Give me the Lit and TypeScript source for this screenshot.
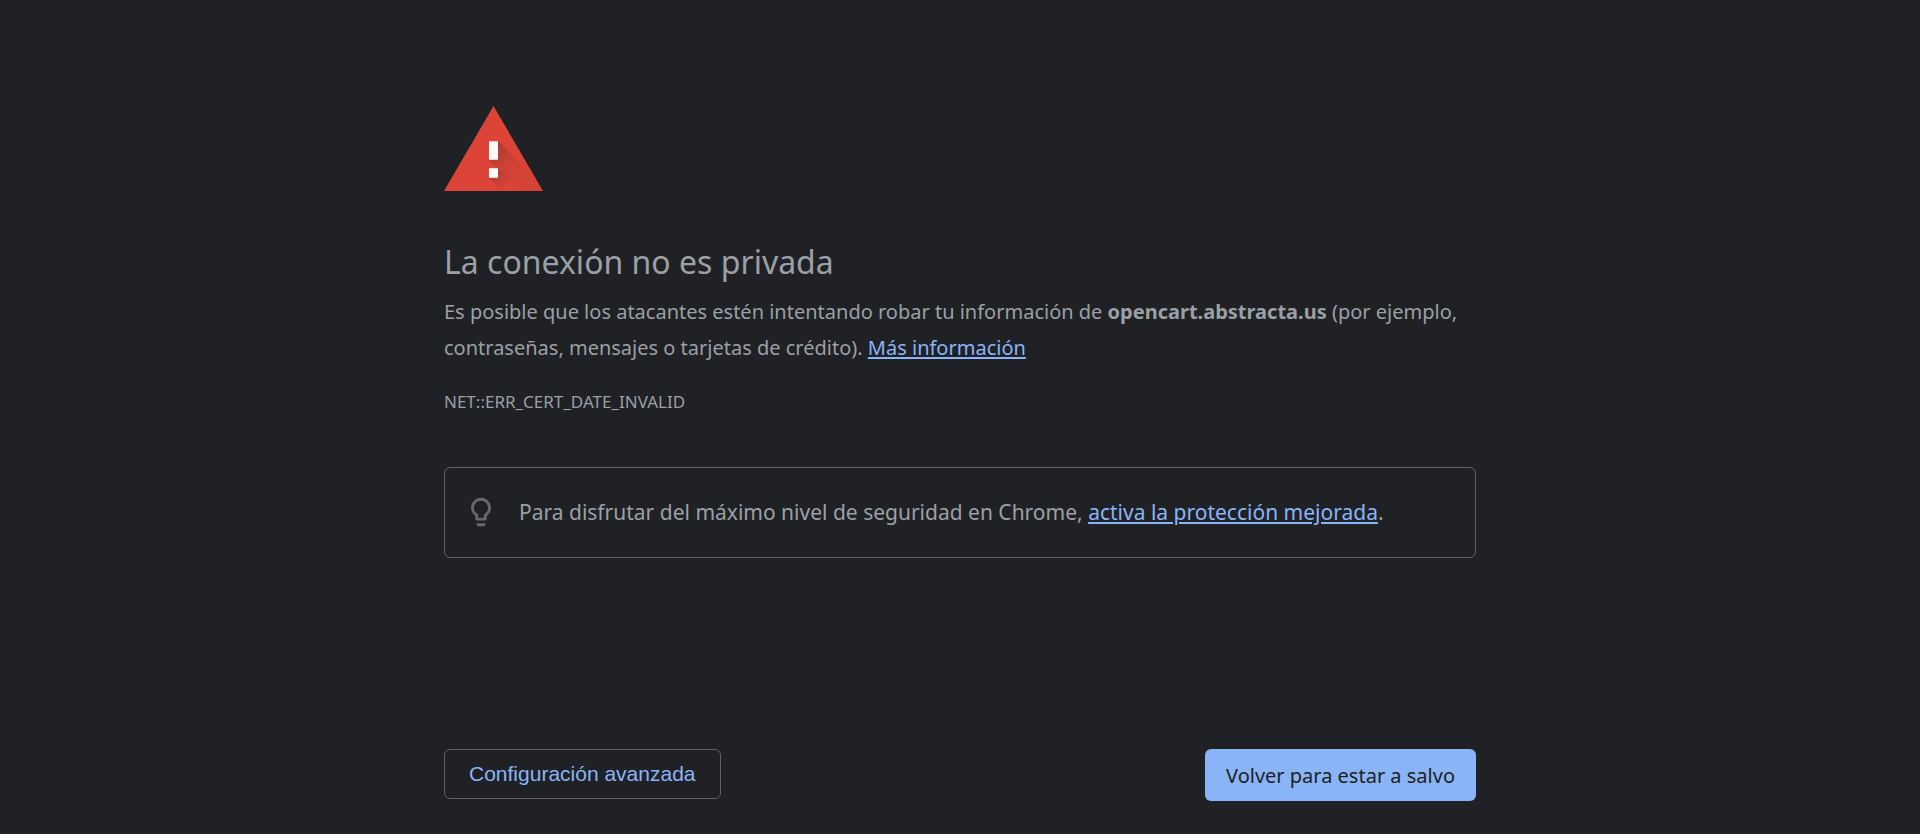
import { LitElement, html, css } from "lit";
import { customElement } from "lit/decorators.js";

@customElement("app-root")
export class AppRoot extends LitElement {
  static styles = css`
    :host {
      display: block;
      box-sizing: border-box;
      min-height: 100vh;
      padding: 106px 24px 32px;
      background: #202124;
      color: #9aa0a6;
      font-family: "Noto Sans", "Open Sans", sans-serif;
      font-size: 20px;
      line-height: 36px;
    }
    main {
      max-width: 1032px;
      margin: 0 auto;
    }
    a {
      color: #8ab4f8;
      text-decoration: underline;
      text-decoration-thickness: 2px;
      text-underline-offset: 2px;
    }
    .warning {
      display: block;
      width: 99px;
      height: 85px;
    }
    h1 {
      margin: 51px 0 12px;
      font-size: 32px;
      font-weight: 400;
      line-height: 40px;
    }
    p {
      margin: 0;
    }
    .code {
      margin-top: 24px;
      font-size: 17px;
      line-height: 24px;
    }
    .tip {
      display: flex;
      align-items: flex-start;
      gap: 21px;
      margin-top: 53px;
      padding: 27px 19px;
      border: 1px solid #5f6368;
      border-radius: 6px;
      font-size: 21px;
      line-height: 35px;
    }
    .bulb {
      flex: none;
      width: 34px;
      height: 34px;
      fill: #696969;
    }
    .actions {
      display: flex;
      flex-wrap: wrap;
      align-items: flex-start;
      justify-content: space-between;
      gap: 16px;
      margin-top: 191px;
    }
    button {
      margin: 0;
      border-radius: 6px;
      cursor: pointer;
    }
    .secondary {
      padding: 12px 24px;
      border: 1px solid #5f6368;
      background: transparent;
      color: #8ab4f8;
      font: 21px/24px "Liberation Sans", Arial, sans-serif;
    }
    .primary {
      padding: 13px 21px 11px;
      border: 0;
      background: #8ab4f8;
      color: #202124;
      font: 20px/28px "Noto Sans", "Open Sans", sans-serif;
    }
  `;

  render() {
    return html`
      <main>
        <svg class="warning" viewBox="0 0 99 85" aria-hidden="true">
          <defs>
            <clipPath id="sign"><path d="M49.500 0 99 85H0z" /></clipPath>
            <linearGradient id="bar" gradientUnits="userSpaceOnUse" x1="50" y1="45" x2="78" y2="73">
              <stop offset="0" stop-color="#3e2723" stop-opacity=".26" />
              <stop offset=".5" stop-color="#3e2723" stop-opacity=".08" />
              <stop offset="1" stop-color="#3e2723" stop-opacity=".04" />
            </linearGradient>
            <linearGradient id="dot" gradientUnits="userSpaceOnUse" x1="50" y1="67" x2="64" y2="81">
              <stop offset="0" stop-color="#3e2723" stop-opacity=".24" />
              <stop offset="1" stop-color="#3e2723" stop-opacity="0" />
            </linearGradient>
          </defs>
          <path d="M49.500 0 99 85H0z" fill="#db4437" />
          <g clip-path="url(#sign)">
            <path d="M54 35 104 85H76L45 54z" fill="url(#bar)" />
            <path d="M54 62 77 85H58L45 72z" fill="url(#dot)" />
          </g>
          <path d="M45 35.300h9v18.400h-9zM45 62.300h9v9.400h-9z" fill="#fff" />
        </svg>
        <h1>La conexión no es privada</h1>
        <p>
          Es posible que los atacantes estén intentando robar tu información de
          <strong>opencart.abstracta.us</strong> (por ejemplo, contraseñas,
          mensajes o tarjetas de crédito). <a href="#informacion">Más información</a>
        </p>
        <p class="code">NET::ERR_CERT_DATE_INVALID</p>
        <div class="tip">
          <svg class="bulb" viewBox="0 0 24 24" aria-hidden="true">
            <path d="M9 21c0 .55.45 1 1 1h4c.55 0 1-.45 1-1v-1H9v1zm3-19C8.140 2 5 5.140 5 9c0 2.380 1.190 4.470 3 5.740V17c0 .55.45 1 1 1h6c.55 0 1-.45 1-1v-2.260c1.810-1.270 3-3.360 3-5.740 0-3.860-3.140-7-7-7zm2.850 11.100-.85.6V16h-4v-2.300l-.85-.6C7.800 12.160 7 10.630 7 9c0-2.760 2.240-5 5-5s5 2.240 5 5c0 1.630-.8 3.160-2.150 4.100z" />
          </svg>
          <p>Para disfrutar del máximo nivel de seguridad en Chrome, <a href="#proteccion">activa la protección mejorada</a>.</p>
        </div>
        <div class="actions">
          <button class="secondary" type="button">Configuración avanzada</button>
          <button class="primary" type="button">Volver para estar a salvo</button>
        </div>
      </main>
    `;
  }
}
